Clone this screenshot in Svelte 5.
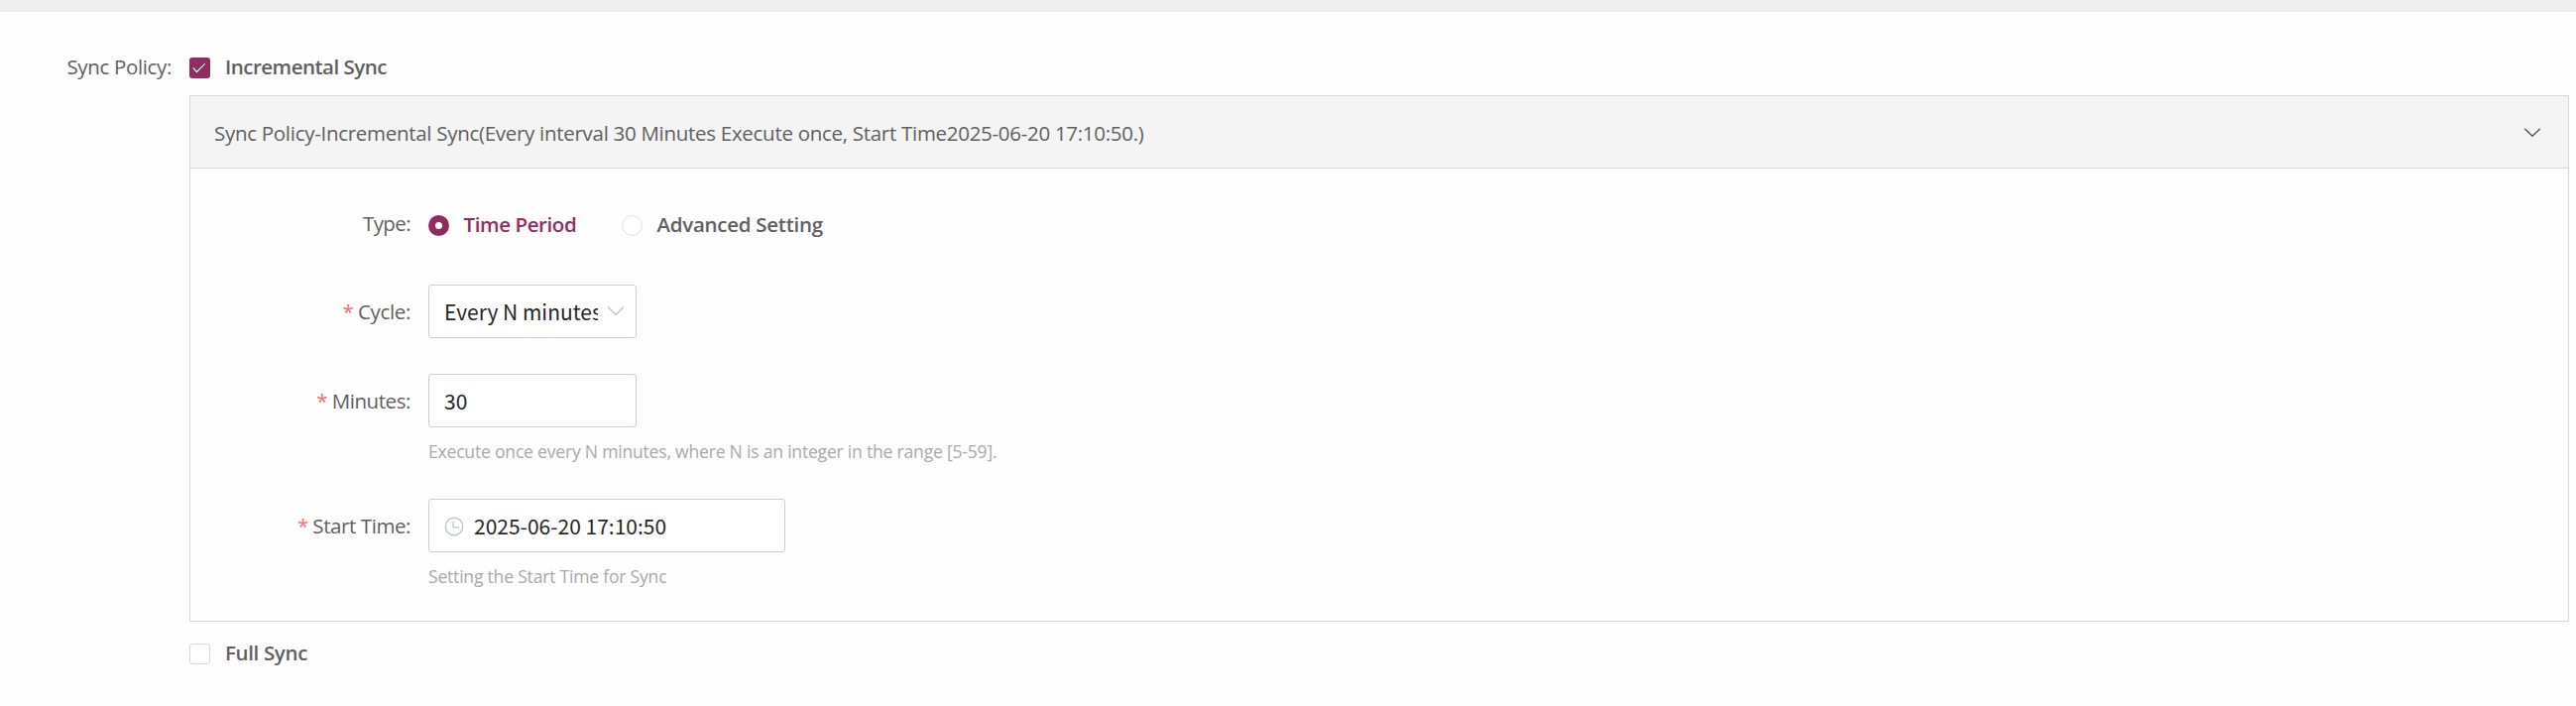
<script>
  let incremental = $state(true);
  let full = $state(false);
  let mode = $state('period');
</script>

<main class="page">
  <div class="strip"></div>
  <div class="item">
    <div class="label outer">Sync Policy:</div>
    <div class="content">
      <button class="check-row" onclick={() => (incremental = !incremental)}>
        <span class="box" class:on={incremental}>
          {#if incremental}
            <svg width="21" height="21" viewBox="0 0 21 21"><path d="M3.8 10.4 7.4 14.7 15.8 6.2" fill="none" stroke="#fff" stroke-width="1.15" /></svg>
          {/if}
        </span>
        <span class="inc">Incremental Sync</span>
      </button>

      <section class="panel">
        <header>
          <span class="summary">Sync Policy-Incremental Sync(Every interval 30 Minutes Execute once, Start Time2025-06-20 17:10:50.)</span>
          <svg width="18" height="12" viewBox="0 0 18 12"><path d="M1.2 1.8 9 9.3 16.8 1.8" fill="none" stroke="#555" stroke-width="1.4" /></svg>
        </header>
        <div class="form">
          <div class="row type">
            <div class="label"><span class="t-type">Type:</span></div>
            <button class="radio first" class:sel={mode === 'period'} onclick={() => (mode = 'period')}><i></i><span class="t-period">Time Period</span></button>
            <button class="radio" class:sel={mode === 'advanced'} onclick={() => (mode = 'advanced')}><i></i><span class="t-adv">Advanced Setting</span></button>
          </div>
          <div class="row cycle">
            <div class="label"><b>*</b><span>Cycle:</span></div>
            <div class="field short">
              <span class="value clip">Every N minutes</span>
              <svg class="arrow" width="18" height="12" viewBox="0 0 18 12"><path d="M1.2 1.5 9 9.5 16.8 1.5" fill="none" stroke="#c0c4cc" stroke-width="1.5" /></svg>
            </div>
          </div>
          <div class="row minutes">
            <div class="label"><b>*</b><span class="t-tight">Minutes:</span></div>
            <div class="field short"><span class="value">30</span></div>
          </div>
          <p class="hint h1"><span>Execute once every N minutes, where N is an integer in the range [5-59].</span></p>
          <div class="row start">
            <div class="label"><b>*</b><span class="t-tight">Start Time:</span></div>
            <div class="field long">
              <svg class="clock" width="20" height="20" viewBox="0 0 20 20" fill="none" stroke="#c0c4cc" stroke-width="1.4"><circle cx="10" cy="10" r="8.7" /><path d="M9.2 5v5.9h6" /></svg>
              <span class="value">2025-06-20 17:10:50</span>
            </div>
          </div>
          <p class="hint h2"><span>Setting the Start Time for Sync</span></p>
        </div>
      </section>

      <button class="check-row last" onclick={() => (full = !full)}>
        <span class="box" class:on={full}></span>
        <span class="full">Full Sync</span>
      </button>
    </div>
  </div>
</main>

<style>
  :global(body) { margin: 0; background: #fff; }
  .page { height: 712px; overflow: hidden; font: 20.5px/30px "Open Sans", sans-serif; letter-spacing: -0.35px; color: #606060; background: #fefefe; }
  .page, .page * { box-sizing: border-box; }
  .strip { height: 12px; background: linear-gradient(#efefef 60%, #ebebeb); }
  .item { display: flex; padding: 40px 7px 0 0; }
  .label { flex: none; text-align: right; white-space: nowrap; }
  .outer { width: 173px; margin-right: 18px; }
  .content { flex: 1; min-width: 0; }
  button { padding: 0; border: 0; background: none; font: inherit; font-weight: 600; letter-spacing: inherit; color: inherit; text-align: left; white-space: nowrap; }
  .check-row { display: flex; align-items: center; gap: 15px; height: 30px; margin-bottom: 14px; }
  .check-row.last { margin: 16px 0 0; }
  .inc { letter-spacing: -0.5px; }
  .full { letter-spacing: -0.35px; }
  .summary { letter-spacing: -0.29px; }
  .t-type { letter-spacing: -0.6px; }
  .t-period { letter-spacing: -0.4px; }
  .t-adv { letter-spacing: -0.27px; }
  .t-tight { letter-spacing: -0.42px; }
  .box { display: block; width: 21px; height: 21px; margin-top: 3px; border: 1px solid #d9d9d9; border-radius: 3px; background: #fff; }
  .box.on { border: 0; background: #922b62; }
  .box svg { display: block; }
  .panel { height: 531px; border: 1px solid #d9d9d9; }
  header { display: flex; align-items: center; justify-content: space-between; height: 73px; padding: 2px 27px 0 24px; border-bottom: 1px solid #d9d9d9; background: #f4f4f4; white-space: nowrap; }
  header svg { margin-top: -1px; }
  .form { padding-top: 40px; }
  .row { display: flex; align-items: center; height: 54px; }
  .row .label { width: 222px; margin-right: 18px; }
  .row.type { height: 32px; align-items: flex-start; }
  .row.cycle { margin-top: 45px; }
  .row.minutes { margin-top: 36px; }
  .row .label b { margin-right: 4.5px; font-weight: 400; color: #f56c6c; }
  .radio { display: flex; align-items: center; gap: 14.5px; height: 32px; }
  .radio.first { width: 195px; }
  .radio i { flex: none; width: 21px; height: 21px; border: 1px solid #dcdfe6; border-radius: 50%; background: #fff; margin-top: 3px; }
  .radio.sel { color: #922b62; }
  .radio.sel i { border: 7.5px solid #922b62; }
  .field { display: flex; align-items: center; height: 54px; padding: 0 15px; border: 1px solid #cfcfcf; border-radius: 3px; background: #fff; color: #262626; font: 21px/30px "Noto Sans CJK SC", sans-serif; letter-spacing: 0; white-space: nowrap; }
  .short { width: 210px; }
  .long { width: 360px; }
  .clip { width: 154.5px; flex: none; overflow: hidden; }
  .arrow { flex: none; margin: -1px 0 0 9px; }
  .clock { margin: 2px 10px 0 0; }
  .hint { display: flex; margin: 0 0 0 240px; font-size: 17.6px; line-height: 26px; letter-spacing: -0.23px; color: #aaa; white-space: nowrap; }
  .h1 { height: 72px; padding-top: 11px; }
  .h2 { padding-top: 11px; }
</style>
